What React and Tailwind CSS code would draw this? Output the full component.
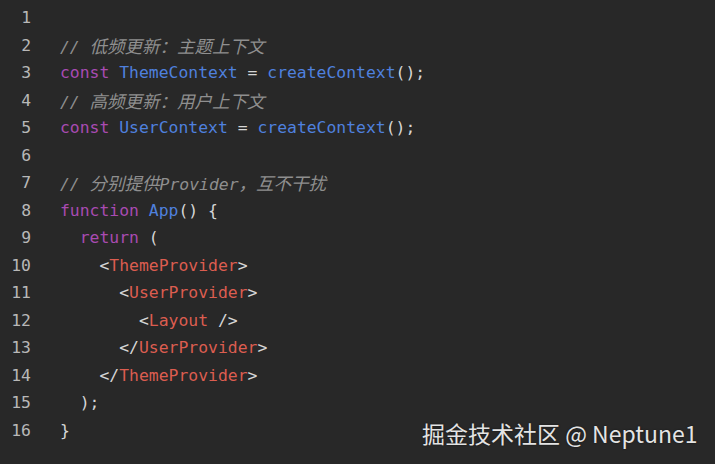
import React from "react";

const K = ({ children }) => <span className="text-[#a94bb2]">{children}</span>;
const B = ({ children }) => <span className="text-[#4f80de]">{children}</span>;
const R = ({ children }) => <span className="text-[#dc5d50]">{children}</span>;
const P = ({ children }) => <span className="text-[#d6d6d6]">{children}</span>;
const C = ({ children }) => <span className="text-[#8f8f8f] italic">{children}</span>;
const Z = ({ children }) => (
  <span className="text-[17.5px]" style={{ fontFamily: '"Noto Sans CJK SC", sans-serif' }}>
    {children}
  </span>
);

const lines = [
  <span />,
  <C>// <Z>低频更新：主题上下文</Z></C>,
  <>
    <K>const</K> <B>ThemeContext</B> <P>=</P> <B>createContext</B><P>();</P>
  </>,
  <C>// <Z>高频更新：用户上下文</Z></C>,
  <>
    <K>const</K> <B>UserContext</B> <P>=</P> <B>createContext</B><P>();</P>
  </>,
  <span />,
  <C>// <Z>分别提供</Z>Provider<Z>，互不干扰</Z></C>,
  <>
    <K>function</K> <B>App</B><P>() {"{"}</P>
  </>,
  <>
    {"  "}<K>return</K> <P>(</P>
  </>,
  <>
    {"    "}<P>&lt;</P><R>ThemeProvider</R><P>&gt;</P>
  </>,
  <>
    {"      "}<P>&lt;</P><R>UserProvider</R><P>&gt;</P>
  </>,
  <>
    {"        "}<P>&lt;</P><R>Layout</R> <P>/&gt;</P>
  </>,
  <>
    {"      "}<P>&lt;/</P><R>UserProvider</R><P>&gt;</P>
  </>,
  <>
    {"    "}<P>&lt;/</P><R>ThemeProvider</R><P>&gt;</P>
  </>,
  <>
    {"  "}<P>);</P>
  </>,
  <P>{"}"}</P>,
];

export default function App() {
  return (
    <div className="relative w-[715px] h-[464px] bg-[#282828] overflow-hidden">
      <div
        className="flex flex-col pt-[4px] text-[16.4px] leading-[27.5px]"
        style={{ fontFamily: '"DejaVu Sans Mono", "Noto Sans CJK SC", monospace' }}
      >
        {lines.map((l, i) => (
          <div key={i} className="flex h-[27.5px] whitespace-pre">
            <div className="w-[31px] text-right text-[#b8b8b8]">{i + 1}</div>
            <div className="pl-[29px] text-[#d6d6d6]">{l}</div>
          </div>
        ))}
      </div>
      <div
        className="absolute left-[422px] top-[417px] text-[23px] leading-[32px] text-[#e4e4e4] whitespace-nowrap"
        style={{ fontFamily: '"Noto Sans CJK SC", sans-serif', textShadow: "0 0 2px rgba(0,0,0,0.6)" }}
      >
        掘金技术社区 @ Neptune1
      </div>
    </div>
  );
}
